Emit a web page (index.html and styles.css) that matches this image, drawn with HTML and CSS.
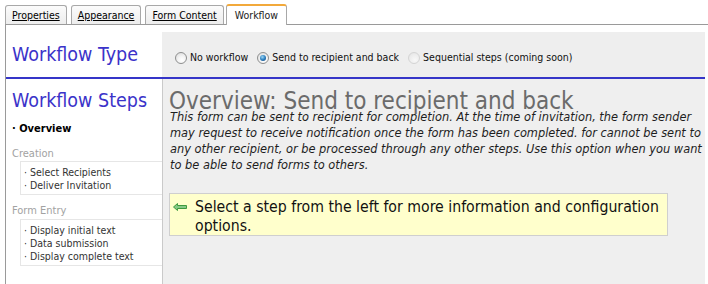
FILE: index.html
```html
<!DOCTYPE html>
<html>
<head>
<meta charset="utf-8">
<link rel="stylesheet" href="styles.css">
</head>
<body>
<div class="tabs">
  <a class="tab">Properties</a>
  <a class="tab">Appearance</a>
  <a class="tab">Form Content</a>
  <a class="tab active">Workflow</a>
</div>
<div class="panel">
  <div class="head">
    <div class="head-title">Workflow Type</div>
    <div class="head-opts">
      <label class="opt"><span class="radio"></span>No workflow</label>
      <label class="opt"><span class="radio checked"></span>Send to recipient and back</label>
      <label class="opt"><span class="radio disabled"></span>Sequential steps (coming soon)</label>
    </div>
  </div>
  <div class="body">
    <aside class="steps">
      <div class="steps-title">Workflow Steps</div>
      <div class="step current">· Overview</div>
      <div class="group">Creation</div>
      <div class="subbox">
        <div class="sub">· Select Recipients</div>
        <div class="sub">· Deliver Invitation</div>
      </div>
      <div class="group group2">Form Entry</div>
      <div class="subbox">
        <div class="sub">· Display initial text</div>
        <div class="sub">· Data submission</div>
        <div class="sub">· Display complete text</div>
      </div>
    </aside>
    <main class="content">
      <h1 class="ov-title">Overview: Send to recipient and back</h1>
      <p class="ov-text">This form can be sent to recipient for completion. At the time of invitation, the form sender may request to receive notification once the form has been completed. for cannot be sent to any other recipient, or be processed through any other steps. Use this option when you want to be able to send forms to others.</p>
      <div class="hint">
        <svg class="arrow" width="14" height="8" viewBox="0 0 14 8"><polygon points="0.5,4 4.5,0.5 4.5,2.5 13.5,2.5 13.5,5.5 4.5,5.5 4.5,7.5" fill="#86c986" stroke="#3f9a3f" stroke-width="1" stroke-linejoin="round"/></svg>
        <div class="hint-text">Select a step from the left for more information and configuration options.</div>
      </div>
    </main>
  </div>
</div>
</body>
</html>
```
FILE: styles.css
```css
html, body {
  margin: 0;
  padding: 0;
  background: #fff;
}
body {
  font-family: "DejaVu Sans Condensed", "DejaVu Sans", sans-serif;
  font-size: 11px;
  color: #222;
  width: 708px;
  height: 284px;
  overflow: hidden;
}
.tabs {
  display: flex;
  align-items: flex-end;
  gap: 4px;
  height: 24px;
  padding-left: 5px;
}
.tab {
  display: block;
  height: 18px;
  line-height: 18px;
  padding: 0 6px;
  border: 1px solid #a8a8a8;
  border-bottom: none;
  border-radius: 3px 3px 0 0;
  background: linear-gradient(#fbfbfb, #ededed);
  color: #000;
  text-decoration: underline;
  font-size: 10.5px;
}
.tab.active {
  position: relative;
  z-index: 2;
  height: 19px;
  border-top: 2px solid #f2a93b;
  margin-left: -2px;
  margin-bottom: -1px;
  padding: 0 8px;
  background: #fff;
  text-decoration: none;
  color: #222;
}
.panel {
  border-top: 1px solid #9a9a9a;
  border-left: 1px solid #9a9a9a;
  margin-left: 5px;
  padding-right: 3px;
  height: 259px;
  display: flex;
  flex-direction: column;
}
.head {
  display: flex;
  height: 52px;
  border-bottom: 2px solid #3535c8;
}
.head-title {
  width: 150px;
  padding: 7px 0 0 6px;
  font-size: 19.5px;
  line-height: 46px;
  color: #3b33c9;
}
.head-opts {
  flex: 1;
  margin-top: 7px;
  padding: 6px 0 0 13px;
  background: #eeeeee;
  display: flex;
  align-items: center;
  gap: 9px;
  font-size: 10.5px;
  color: #111;
}
.opt {
  display: flex;
  align-items: center;
  line-height: 13px;
}
.radio {
  width: 10px;
  height: 10px;
  border-radius: 50%;
  border: 1px solid #8e8f8f;
  background: radial-gradient(circle at 60% 70%, #ffffff 0, #f4f4f4 40%, #d7d7d7 100%);
  margin-right: 3px;
  position: relative;
}
.radio.checked::after {
  content: "";
  position: absolute;
  left: 2px;
  top: 2px;
  width: 6px;
  height: 6px;
  border-radius: 50%;
  background: radial-gradient(circle at 40% 35%, #9fd8f5 0, #2d80c0 50%, #133f72 100%);
}
.radio.disabled {
  border-color: #d4d4d4;
  background: radial-gradient(circle at 60% 70%, #f8f8f8 0, #ececec 60%, #e0e0e0 100%);
}
.body {
  flex: 1;
  display: flex;
}
.steps {
  width: 156px;
  background: #fff;
  border-right: 1px solid #cacaca;
  display: flex;
  flex-direction: column;
}
.steps-title {
  padding: 11px 0 0 6px;
  font-size: 19.5px;
  line-height: 22px;
  color: #3b33c9;
}
.step {
  padding-left: 6px;
  line-height: 13px;
  margin-top: 10px;
}
.step.current {
  font-weight: bold;
  color: #000;
}
.group {
  padding-left: 6px;
  line-height: 13px;
  margin-top: 12px;
  margin-bottom: 1px;
  color: #a2a2a2;
}
.group2 {
  margin-top: 9px;
  margin-bottom: 2px;
}
.subbox {
  margin-left: 14px;
  border: 1px solid #e6e6e6;
  border-right: none;
  padding: 4px 0 2px 3px;
}
.sub {
  line-height: 13px;
  font-size: 10.5px;
  color: #333;
}
.content {
  flex: 1;
  background: #efefef;
  padding: 11px 1px 0 6px;
}
.ov-title {
  margin: 0 0 -3px 0;
  font-weight: normal;
  font-size: 24px;
  line-height: 22px;
  color: #6b6b6b;
}
.ov-text {
  margin: 0;
  font-family: "DejaVu Sans", sans-serif;
  font-style: italic;
  font-size: 11.4px;
  line-height: 16px;
  color: #1e1e1e;
  padding-left: 1px;
}
.hint {
  margin: 20px 36px 0 0;
  background: #ffffcc;
  border: 1px solid #cfcfcf;
  padding: 3px 8px 0 3px;
  display: flex;
  align-items: flex-start;
  gap: 8px;
}
.arrow {
  margin-top: 6px;
  flex: none;
}
.hint-text {
  font-size: 15.7px;
  line-height: 19px;
  color: #111;
}
```
